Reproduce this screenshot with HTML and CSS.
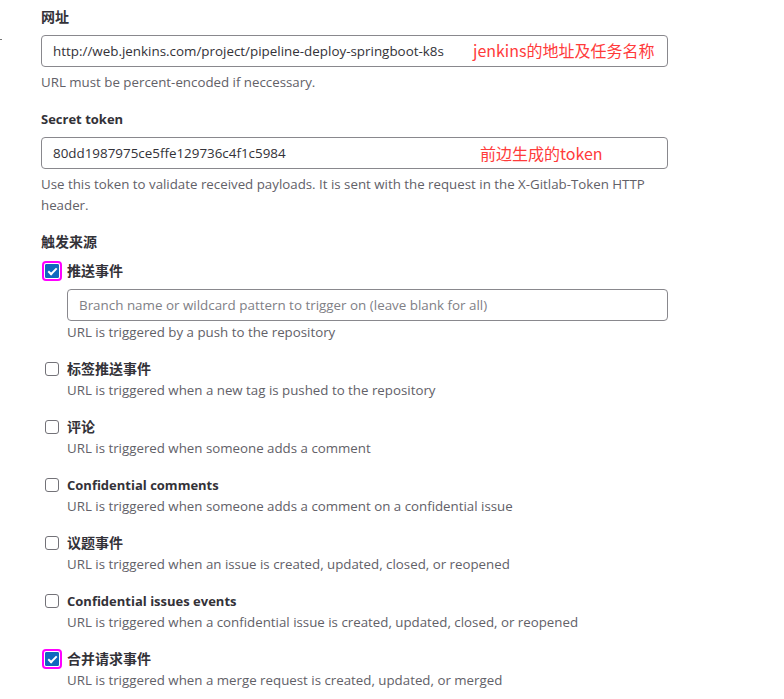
FILE: index.html
```html
<!DOCTYPE html>
<html lang="zh">
<head>
<meta charset="utf-8">
<title>Webhook</title>
<link rel="stylesheet" href="styles.css">
</head>
<body>
<div class="edge-mark"></div>
<main class="form">
  <section class="field">
    <label class="label cjk">网址</label>
    <div class="input-wrap">
      <div class="input">http://web.jenkins.com/project/pipeline-deploy-springboot-k8s</div>
      <span class="note note-url">jenkins的地址及任务名称</span>
    </div>
    <p class="help">URL must be percent-encoded if neccessary.</p>
  </section>

  <section class="field field-token">
    <label class="label">Secret token</label>
    <div class="input-wrap">
      <div class="input">80dd1987975ce5ffe129736c4f1c5984</div>
      <span class="note note-token">前边生成的token</span>
    </div>
    <p class="help help-multi">Use this token to validate received payloads. It is sent with the request in the X-Gitlab-Token HTTP header.</p>
  </section>

  <section class="field field-triggers">
    <label class="label cjk">触发来源</label>

    <div class="trigger trigger-first">
      <div class="check-row">
        <span class="checkbox checked marked"></span>
        <span class="check-label cjk">推送事件</span>
      </div>
      <div class="sub">
        <div class="input input-branch placeholder">Branch name or wildcard pattern to trigger on (leave blank for all)</div>
        <p class="help help-sub">URL is triggered by a push to the repository</p>
      </div>
    </div>

    <div class="trigger">
      <div class="check-row">
        <span class="checkbox"></span>
        <span class="check-label cjk">标签推送事件</span>
      </div>
      <p class="help sub">URL is triggered when a new tag is pushed to the repository</p>
    </div>

    <div class="trigger">
      <div class="check-row">
        <span class="checkbox"></span>
        <span class="check-label cjk">评论</span>
      </div>
      <p class="help sub">URL is triggered when someone adds a comment</p>
    </div>

    <div class="trigger">
      <div class="check-row">
        <span class="checkbox"></span>
        <span class="check-label">Confidential comments</span>
      </div>
      <p class="help sub">URL is triggered when someone adds a comment on a confidential issue</p>
    </div>

    <div class="trigger">
      <div class="check-row">
        <span class="checkbox"></span>
        <span class="check-label cjk">议题事件</span>
      </div>
      <p class="help sub">URL is triggered when an issue is created, updated, closed, or reopened</p>
    </div>

    <div class="trigger">
      <div class="check-row">
        <span class="checkbox"></span>
        <span class="check-label">Confidential issues events</span>
      </div>
      <p class="help sub">URL is triggered when a confidential issue is created, updated, closed, or reopened</p>
    </div>

    <div class="trigger">
      <div class="check-row">
        <span class="checkbox checked marked"></span>
        <span class="check-label cjk">合并请求事件</span>
      </div>
      <p class="help sub">URL is triggered when a merge request is created, updated, or merged</p>
    </div>
  </section>
</main>
</body>
</html>
```

FILE: styles.css
```css
html, body {
  margin: 0;
  padding: 0;
  background: #ffffff;
}

body {
  font-family: "Open Sans", "Noto Sans CJK SC", sans-serif;
  font-size: 13.3px;
  color: #333238;
  position: relative;
  overflow: hidden;
  height: 699px;
}

.edge-mark {
  position: absolute;
  left: 0;
  top: 39px;
  width: 2px;
  height: 1px;
  background: #777;
}

.form {
  width: 627px;
  padding: 7px 0 0 41px;
}

.field {
  display: flex;
  flex-direction: column;
}

.label {
  font-weight: 700;
  font-size: 13px;
  line-height: 20px;
  height: 20px;
  color: #333238;
}

.label.cjk,
.check-label.cjk {
  font-size: 14px;
}

.input-wrap {
  position: relative;
  margin-top: 8px;
}

.input {
  box-sizing: border-box;
  height: 32px;
  border: 1px solid #89888d;
  border-radius: 4px;
  padding: 0 11px;
  line-height: 30px;
  font-size: 13.4px;
  color: #333238;
  white-space: nowrap;
  overflow: hidden;
}

.placeholder {
  color: #808086;
}

.note {
  position: absolute;
  top: 5px;
  font-family: "Noto Sans CJK SC", sans-serif;
  font-size: 16px;
  line-height: 22px;
  color: #ff3b3b;
  white-space: nowrap;
}

.note-url { left: 432px; top: 4px; }
.note-token { left: 439px; }

.help {
  margin: 5px 0 0;
  line-height: 20px;
  font-size: 13.3px;
  color: #626168;
}

.help-multi {
  line-height: 21px;
  width: 627px;
}

.field-token {
  margin-top: 17px;
}

.field-triggers {
  margin-top: 16px;
}

.trigger {
  margin-top: 17px;
}

.trigger-first {
  margin-top: 9px;
}

.check-row {
  display: flex;
  align-items: center;
  height: 20px;
}

.checkbox {
  box-sizing: border-box;
  width: 14px;
  height: 14px;
  margin-left: 4px;
  border: 1px solid #737278;
  border-radius: 3px;
  background: #fff;
  position: relative;
  flex: none;
}

.checkbox.checked {
  background: #1068bf;
  border-color: #1068bf;
}

.checkbox.checked::after {
  content: "";
  position: absolute;
  left: 4px;
  top: 1px;
  width: 3px;
  height: 7px;
  border: solid #fff;
  border-width: 0 2px 2px 0;
  transform: rotate(45deg);
}

.checkbox.marked {
  outline: 2px solid #ff00ff;
  outline-offset: 1px;
  border-radius: 1px;
}

.check-label {
  margin-left: 8px;
  font-weight: 700;
  font-size: 13px;
  line-height: 20px;
}

.sub {
  margin-left: 26px;
}

.help.sub {
  margin-top: 1px;
}

.input-branch {
  margin-top: 8px;
}

.help-sub {
  margin-top: 1px;
}
```
